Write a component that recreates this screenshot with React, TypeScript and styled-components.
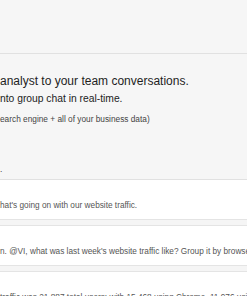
import React from "react";
import styled, { createGlobalStyle } from "styled-components";

const GlobalStyle = createGlobalStyle`
  html, body {
    margin: 0;
    padding: 0;
    background: #ffffff;
    overflow: hidden;
  }
  body {
    font-family: "Liberation Sans", Arial, Helvetica, sans-serif;
  }
`;

const Page = styled.div`
  width: 247px;
  height: 296px;
  overflow: hidden;
  display: flex;
  flex-direction: column;
`;

const TopBar = styled.div`
  height: 53px;
  background: #f6f6f6;
  border-bottom: 1px solid #e1e1e1;
  flex-shrink: 0;
`;

const Intro = styled.section`
  background: #f6f6f6;
  border-bottom: 1px solid #e1e1e1;
  padding: 19px 0 4px;
  display: flex;
  flex-direction: column;
  flex-shrink: 0;
`;

const Title = styled.h2`
  margin: 0;
  font-size: 12px;
  line-height: 16px;
  font-weight: 400;
  color: #1e1e1e;
  white-space: nowrap;
`;

const Lead = styled.p`
  margin: 2.5px 0 0;
  font-size: 10.3px;
  line-height: 13px;
  color: #222;
  white-space: nowrap;
`;

const Note = styled.p<{ $gap: number }>`
  margin: ${(p) => p.$gap}px 0 0;
  font-size: 8.3px;
  line-height: 11px;
  color: #444;
  white-space: nowrap;
`;

const Messages = styled.div`
  display: flex;
  flex-direction: column;
  gap: 5px;
  background: #f5f5f5;
  flex: 1;
`;

const Message = styled.div<{ $last?: boolean }>`
  background: #fff;
  padding: 20px 0 8px;
  border-top: 1px solid #e4e4e4;
  border-bottom: ${(p) => (p.$last ? "none" : "1px solid #e4e4e4")};
  &:first-child {
    border-top: none;
  }
`;

const MessageText = styled.p`
  margin: 0;
  font-size: 8.25px;
  line-height: 11px;
  color: #555;
  white-space: nowrap;
`;

const App = () => {
  return (
    <Page>
      <GlobalStyle />
      <TopBar />
      <Intro>
        <Title>analyst to your team conversations.</Title>
        <Lead>nto group chat in real-time.</Lead>
        <Note $gap={9}>earch engine + all of your business data)</Note>
        <Note $gap={39}>.</Note>
      </Intro>
      <Messages>
        <Message>
          <MessageText>hat's going on with our website traffic.</MessageText>
        </Message>
        <Message>
          <MessageText>
            n. @VI, what was last week's website traffic like? Group it by browse
          </MessageText>
        </Message>
        <Message $last>
          <MessageText>
            traffic was 21,887 total users; with 15,468 using Chrome, 11,976 usi
          </MessageText>
        </Message>
      </Messages>
    </Page>
  );
};

export default App;
